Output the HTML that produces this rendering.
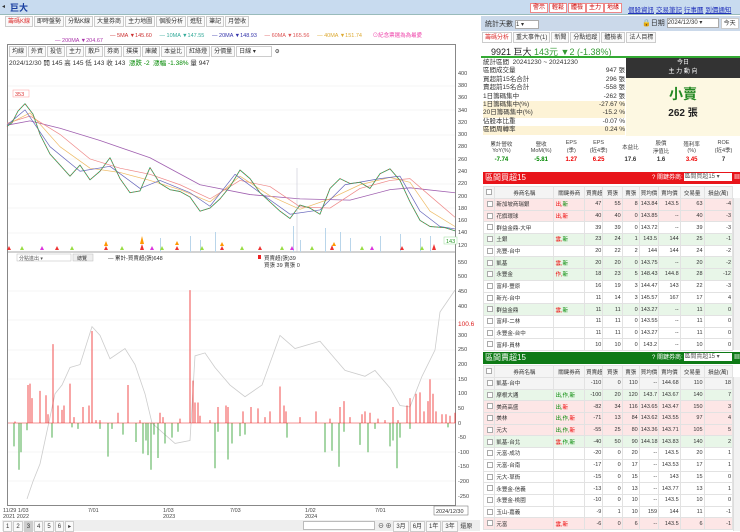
<!DOCTYPE html><html><head><meta charset="utf-8"><style>
*{box-sizing:border-box;margin:0;padding:0}
body{width:740px;height:531px;overflow:hidden;background:#fff;font-family:"Liberation Sans","Noto Sans CJK TC",sans-serif;font-size:7px;color:#333;position:relative}
.a{position:absolute}
.btn{position:absolute;top:3px;height:10px;border:1px solid #e88;background:#fff;color:#c00;font-size:6px;line-height:8px;padding:0 2px}
.lk{color:#2233bb;text-decoration:underline;font-size:6.5px}
.tab{display:inline-block;border:1px solid #ccc;padding:0 2px;height:11px;line-height:10px;font-size:6px;margin-right:1px;background:#fafafa}
table{border-collapse:collapse}
.t td{border:1px solid #e2e2e2;height:11.7px;font-size:5.5px;text-align:right;padding:0 1px;white-space:nowrap;overflow:hidden}
.t td:nth-child(2),.t td:nth-child(3){text-align:left}
.t tr.h td{text-align:center;background:#f4f4f4;height:12px}
.pk td{background:#fde6e6}.gr td{background:#e8f6e8}
.r{color:#e00}.g{color:#080}
.cb{display:inline-block;width:6px;height:6px;border:1px solid #aaa;background:#fff;vertical-align:middle}
</style></head><body>
<div class="a" style="left:0;top:0;width:740px;height:15px;background:#c8dbef;border-bottom:1px solid #9bb"></div>
<div class="a" style="left:2px;top:3px;font-size:6px">◂</div>
<div class="a" style="left:10px;top:1px;font-size:9px;color:#1a3fa0;font-weight:bold">巨大</div>
<div class="btn" style="left:530px">警示</div><div class="btn" style="left:549px">輕鬆</div><div class="btn" style="left:568px">體檢</div><div class="btn" style="left:586px">主力</div><div class="btn" style="left:604px">地緣</div>
<div class="a" style="left:628px;top:4px"><span class="lk">個股資訊</span> <span class="lk">交易筆記</span> <span class="lk">行事曆</span> <span class="lk">到價通知</span></div>
<div class="a" style="left:5px;top:16px"><span class="tab" style="color:#d33">籌碼K線</span><span class="tab">即時盤勢</span><span class="tab">分點K線</span><span class="tab">大量券商</span><span class="tab">主力地圖</span><span class="tab">個股分析</span><span class="tab">進駐</span><span class="tab">筆記</span><span class="tab">月營收</span></div>
<div class="a" style="left:110px;top:31px;font-size:5.5px;white-space:nowrap"><span style="color:#c33">— </span><span style="color:#c33">5MA ▼145.60</span> &nbsp; &nbsp; <span style="color:#3a9">— 10MA ▼147.55</span> &nbsp; &nbsp; <span style="color:#33a">— 20MA ▼148.93</span> &nbsp; &nbsp; <span style="color:#d55">— 60MA ▼165.56</span> &nbsp; &nbsp; <span style="color:#da3">— 40MA ▼151.74</span> &nbsp; &nbsp; &nbsp; <span style="color:#e4a">⊙紀念票選為為最愛</span></div>
<div class="a" style="left:55px;top:38px;font-size:5.5px;color:#a3a">— 200MA ▼204.67</div>
<div class="a" style="left:7px;top:44px;width:449px;height:462px;border:1px solid #888"></div>
<div class="a" style="left:9px;top:46px;font-size:5.5px"><span class="tab">均線</span><span class="tab">外資</span><span class="tab">投信</span><span class="tab">主力</span><span class="tab">散戶</span><span class="tab">券商</span><span class="tab">撲撲</span><span class="tab">庫藏</span><span class="tab">本益比</span><span class="tab">紅綠燈</span><span class="tab">分價量</span><span class="tab" style="width:36px;background:#fff">日線 ▾</span> ⚙</div>
<div class="a" style="left:9px;top:57px;font-size:6.5px">2024/12/30 開 145 高 145 低 143 收 143 &nbsp;<span class="g">漲跌 -2 &nbsp;漲幅 -1.38%</span> 量 947</div>
<svg class="a" style="left:0;top:0" width="480" height="531">
<g stroke="#eee" stroke-width="0.6"><line x1="8" x2="455" y1="86" y2="86"/><line x1="8" x2="455" y1="110" y2="110"/><line x1="8" x2="455" y1="135" y2="135"/><line x1="8" x2="455" y1="159" y2="159"/><line x1="8" x2="455" y1="184" y2="184"/><line x1="8" x2="455" y1="208" y2="208"/><line x1="8" x2="455" y1="233" y2="233"/>
<line x1="8" x2="455" y1="291" y2="291"/><line x1="8" x2="455" y1="320" y2="320"/><line x1="8" x2="455" y1="350" y2="350"/><line x1="8" x2="455" y1="379" y2="379"/><line x1="8" x2="455" y1="452" y2="452"/><line x1="8" x2="455" y1="481" y2="481"/></g>
<line x1="8" x2="455" y1="252" y2="252" stroke="#888" stroke-width="0.8"/>
<g fill="#b9d5ea"><rect x="190" y="236" width="1" height="16"/><rect x="200" y="240" width="1" height="12"/><rect x="215" y="232" width="1" height="20"/><rect x="293" y="226" width="1" height="26"/><rect x="325" y="228" width="1" height="24"/><rect x="340" y="232" width="1" height="20"/><rect x="160" y="238" width="1" height="14"/><rect x="380" y="236" width="1" height="16"/><rect x="400" y="234" width="1" height="18"/><rect x="420" y="238" width="1" height="14"/><rect x="430" y="236" width="1" height="16"/><rect x="300" y="240" width="1" height="12"/><rect x="350" y="238" width="1" height="14"/></g>
<g transform="matrix(1 0 0 -0.614 0 318.6)" fill="none" stroke-linejoin="round">
<polyline vector-effect="non-scaling-stroke" stroke="#a060b0" stroke-width="0.8" points="7,315 30,322 60,310 100,290 150,262 200,218 250,202 300,195 350,193 390,210 410,213 455,205"/>
<polyline vector-effect="non-scaling-stroke" stroke="#e88" stroke-width="0.7" points="7,318 30,330 60,300 90,260 120,245 150,235 180,218 210,195 240,225 270,215 300,182 330,180 360,212 390,225 410,228 430,200 455,165"/>
<polyline vector-effect="non-scaling-stroke" stroke="#eb6" stroke-width="0.7" points="7,316 30,335 60,280 90,245 120,238 150,225 180,210 210,190 240,232 270,200 300,178 330,195 360,218 390,230 410,222 430,175 455,150"/>
<polyline vector-effect="non-scaling-stroke" stroke="#66b" stroke-width="0.7" points="7,315 25,340 50,280 80,240 110,248 140,212 160,225 190,205 210,183 235,235 260,205 290,170 320,177 345,218 380,228 400,232 420,175 440,150 455,146"/>
<polyline vector-effect="non-scaling-stroke" stroke="#3a6" stroke-width="0.9" points="7,313 12,319 18,338 25,350 33,333 40,300 50,268 60,250 70,232 80,250 90,226 100,240 110,262 120,228 130,205 140,208 150,246 160,220 170,210 180,207 190,198 200,175 210,180 220,195 230,215 240,242 250,228 260,205 270,190 280,175 290,163 300,185 310,180 320,170 330,212 340,228 350,220 360,222 370,212 380,236 390,244 400,225 410,190 420,160 430,150 445,148 455,143"/>
<polyline vector-effect="non-scaling-stroke" stroke="#e33" stroke-width="0.6" stroke-dasharray="1 2" points="7,313 12,319 18,338 25,350 33,333 40,300 50,268 60,250 70,232 80,250 90,226 100,240 110,262 120,228 130,205 140,208 150,246 160,220 170,210 180,207 190,198 200,175 210,180 220,195 230,215 240,242 250,228 260,205 270,190 280,175 290,163 300,185 310,180 320,170 330,212 340,228 350,220 360,222 370,212 380,236 390,244 400,225 410,190 420,160 430,150 445,148 455,143"/>
</g>
<line x1="297" x2="297" y1="168" y2="252" stroke="#bbc" stroke-width="0.5"/>
<g fill="#e33"><path d="M7 250l2-4 2 4zM55 250l2-4 2 4zM104 250l2-4 2 4zM140 250l2-6 2 6zM175 250l2-4 2 4zM220 250l2-4 2 4zM258 250l2-4 2 4zM330 250l2-5 2 5zM400 250l2-4 2 4zM432 250l2-6 2 6z"/></g>
<g fill="#f90"><path d="M104 246l2-5 2 5zM140 244l2-8 2 8zM175 245l2-4 2 4zM220 246l2-4 2 4zM332 246l2-4 2 4z"/></g>
<g fill="#9d4"><path d="M20 250l2-4 2 4zM70 250l2-4 2 4zM120 250l2-4 2 4zM160 250l2-4 2 4zM200 250l2-4 2 4zM240 250l2-4 2 4zM280 250l2-4 2 4zM310 250l2-4 2 4zM360 250l2-4 2 4zM420 250l2-4 2 4z"/></g>
<g fill="#d3d"><path d="M40 250l2-4 2 4zM150 250l2-4 2 4zM290 250l2-4 2 4zM370 250l2-4 2 4z"/></g>
<g transform="matrix(1 0 0 -0.292 0 423)">
<polyline vector-effect="non-scaling-stroke" fill="none" stroke="#ccc" stroke-width="0.8" points="27,-260 33,-200 40,-140 55,100 62,130 70,190 80,200 92,330 100,300 110,220 125,255 135,200 145,100 152,0 165,-40 175,-70 190,-60 195,230 205,240 215,190 230,130 245,90 262,130 280,300 295,255 320,280 335,220 345,180 365,160 375,180 390,120 400,60 410,55 422,160 435,250 440,380 455,455"/>
<path vector-effect="non-scaling-stroke" stroke="#e22" stroke-width="0.8" d="M28 0V130M30 0V135M32 0V85M40 0V110M46 0V95M48 0V30M53 0V270M58 0V60M62 0V45M64 0V60M70 0V135M74 0V20M83 0V55M89 0V60M92 0V315M96 0V10M118 0V35M128 0V130M160 0V35M163 0V20M190 0V455M193 0V145M195 0V70M198 0V70M200 0V25M218 0V55M226 0V60M228 0V55M243 0V40M251 0V55M258 0V50M270 0V40M280 0V125M284 0V60M286 0V40M300 0V20M316 0V40M340 0V55M344 0V75M362 0V30M365 0V40M370 0V35M393 0V55M407 0V60M410 0V85M416 0V100M420 0V105M424 0V40M428 0V75M430 0V150M433 0V100M436 0V40M442 0V30M446 0V30M450 0V25M455 0V35M15 0V5M100 0V10M140 0V10M180 0V15M210 0V10M265 0V20M300 0V15M330 0V15M350 0V20M378 0V15M385 0V10M398 0V10"/>
<path vector-effect="non-scaling-stroke" stroke="#292" stroke-width="0.8" d="M14 0V-80M19 0V-160M21 0V-100M27 0V-25M52 0V-50M72 0V-15M78 0V-20M100 0V-20M108 0V-115M112 0V-20M123 0V-40M136 0V-65M143 0V-105M146 0V-60M148 0V-110M151 0V-160M154 0V-40M158 0V-120M165 0V-70M172 0V-50M178 0V-30M215 0V-155M218 0V-30M228 0V-125M232 0V-70M240 0V-45M245 0V-40M287 0V-50M325 0V-100M332 0V-95M339 0V-150M344 0V-30M360 0V-75M368 0V-100M375 0V-20M390 0V-80M393 0V-60M397 0V-155M400 0V-50M410 0V-20M448 0V-15"/>
</g>
<line x1="8" x2="455" y1="423" y2="423" stroke="#e22" stroke-width="0.6"/>
<g font-size="5.5" fill="#444" font-family="Liberation Sans,sans-serif">
<text x="458" y="75">400</text><text x="458" y="87">380</text><text x="458" y="99">360</text><text x="458" y="112">340</text><text x="458" y="124">320</text><text x="458" y="136">300</text><text x="458" y="148">280</text><text x="458" y="161">260</text><text x="458" y="173">240</text><text x="458" y="185">220</text><text x="458" y="198">200</text><text x="458" y="210">180</text><text x="458" y="222">160</text><text x="458" y="234">140</text><text x="458" y="247">120</text>
<text x="458" y="264">550</text><text x="458" y="278">500</text><text x="458" y="293">450</text><text x="458" y="308">400</text><text x="458" y="337">300</text><text x="458" y="351">250</text><text x="458" y="366">200</text><text x="458" y="381">150</text><text x="458" y="395">100</text><text x="458" y="410">50</text><text x="458" y="425">0</text><text x="458" y="439">-50</text><text x="458" y="454">-100</text><text x="458" y="468">-150</text><text x="458" y="483">-200</text><text x="458" y="498">-250</text>
<text x="3" y="512">11/29 1/03</text><text x="3" y="518">2021 2022</text><text x="88" y="512">7/01</text><text x="163" y="512">1/03</text><text x="163" y="518">2023</text><text x="230" y="512">7/03</text><text x="305" y="512">1/02</text><text x="305" y="518">2024</text><text x="375" y="512">7/01</text>
</g>
<text x="458" y="326" font-size="6.5" fill="#d22">100.6</text>
<rect x="13" y="90" width="16" height="7" fill="#fff" stroke="#f99" stroke-width="0.5"/><text x="15" y="96" font-size="5.5" fill="#d33">353</text>
<rect x="444" y="237" width="13" height="7" fill="#fff" stroke="#9d9" stroke-width="0.5"/><text x="446" y="243" font-size="5.5" fill="#292">143</text>
<rect x="434" y="506" width="34" height="9" fill="#fff" stroke="#666" stroke-width="0.5"/><text x="436" y="513" font-size="5.5" fill="#333">2024/12/30</text>
<rect x="17" y="254" width="54" height="7" fill="#fff" stroke="#bbb" stroke-width="0.5"/><text x="19" y="260" font-size="5" fill="#555">分點進出 ▾</text>
<rect x="73" y="254" width="20" height="7" fill="#eee" stroke="#bbb" stroke-width="0.5"/><text x="77" y="260" font-size="5" fill="#333">總覽</text>
<text x="108" y="260" font-size="5.5" fill="#333">— 累計-買賣超(張)648</text>
<rect x="258" y="255" width="3" height="4" fill="#e22"/><text x="264" y="260" font-size="5.5" fill="#333">買賣超(張)39</text><text x="264" y="267" font-size="5.5" fill="#333">買張 39 賣張 0</text>
</svg>
<div class="a" style="left:2px;top:520px;width:478px;height:11px;background:#eee"></div>
<div class="a" style="left:3px;top:521px;font-size:6px"><span class="tab">1</span><span class="tab">2</span><span class="tab" style="background:#ccc">3</span><span class="tab">4</span><span class="tab">5</span><span class="tab">6</span><span class="tab">▸</span></div>
<div class="a" style="left:303px;top:521px;width:72px;height:9px;border:1px solid #bbb;background:#fff"></div>
<div class="a" style="left:378px;top:521px;font-size:6px">⊖ ⊕ <span class="tab">3月</span><span class="tab">6月</span><span class="tab">1年</span><span class="tab">3年</span> 還原</div>
<div class="a" style="left:481px;top:16px;width:259px;height:15px;background:#cbd9ea"></div>
<div class="a" style="left:485px;top:19px;font-size:7px">統計天數 <span style="display:inline-block;width:24px;height:9px;background:#fff;border:1px solid #aaa;font-size:6px;vertical-align:middle">1 ▾</span></div>
<div class="a" style="left:642px;top:18px;font-size:7px">🔒日期 <span style="display:inline-block;width:52px;height:10px;background:#fff;border:1px solid #aaa;font-size:6px;vertical-align:middle">2024/12/30 ▾</span> <span class="tab" style="background:#fff">今天</span></div>
<div class="a" style="left:482px;top:32px;font-size:6px"><span class="tab" style="color:#d33;background:#fff">籌碼分析</span><span class="tab">重大事件(1)</span><span class="tab">新聞</span><span class="tab">分點追蹤</span><span class="tab">體檢表</span><span class="tab">法人目標</span></div>
<div class="a" style="left:481px;top:43px;width:259px;height:15px;border-bottom:2px solid #3a3"></div>
<div class="a" style="left:491px;top:45px;font-size:9px;color:#222">9921 巨大 <span style="color:#393">143元 ▼2 (-1.38%)</span></div>
<div class="a" style="left:626px;top:58px;width:114px;height:20px;background:#333;color:#fff;text-align:center;font-size:6px;line-height:9px;padding-top:1px">今日<br>主 力 動 向</div>
<div class="a" style="left:626px;top:78px;width:114px;height:58px;background:#fdf8e2;text-align:center"><div style="font-size:14px;color:#282;margin-top:6px;font-weight:bold">小賣</div><div style="font-size:10px;color:#222;font-weight:bold">262 張</div></div>
<div class="a" style="left:483px;top:59px;width:142px;font-size:6.5px;line-height:8.4px">
<div>統計區間 &nbsp;20241230 ~ 20241230</div>
<div>區間成交量<span style="float:right">947 張</span></div>
<div>買超前15名合計<span style="float:right">296 張</span></div>
<div>賣超前15名合計<span style="float:right">-558 張</span></div>
<div>1日籌碼集中<span style="float:right">-262 張</span></div>
<div style="background:#fdf3d6">1日籌碼集中(%)<span style="float:right">-27.67 %</span></div>
<div style="background:#fdf3d6">20日籌碼集中(%)<span style="float:right">-15.2 %</span></div>
<div>佔股本比重<span style="float:right">-0.07 %</span></div>
<div style="background:#fdf3d6">區間周轉率<span style="float:right">0.24 %</span></div></div>
<table class="a" style="left:481px;top:139px;width:259px;font-size:5.5px;text-align:center">
<tr style="height:16px;color:#444"><td>累計營收<br>YoY(%)</td><td>營收<br>MoM(%)</td><td>EPS<br>(季)</td><td>EPS<br>(近4季)</td><td>本益比</td><td>股價<br>淨值比</td><td>殖利率<br>(%)</td><td>ROE<br>(近4季)</td></tr>
<tr style="height:10px;font-weight:bold;font-size:6px"><td class="g">-7.74</td><td class="g">-5.81</td><td class="r">1.27</td><td class="r">6.25</td><td>17.6</td><td>1.6</td><td class="r">3.45</td><td>7</td></tr></table>
<div class="a" style="left:483px;top:172px;width:257px;height:12px;background:#e8141a;color:#fff;font-size:8px;line-height:12px;padding-left:2px">區間買超15<span style="float:right;font-size:6px">? 關鍵券商: <span style="display:inline-block;width:48px;height:8px;background:#fff;color:#555;vertical-align:middle;line-height:8px">區間買超15 ▾</span> ▦ </span></div>
<table class="t a" style="left:483px;top:186px;width:250px;table-layout:fixed">
<colgroup><col style="width:10px"><col style="width:52px"><col style="width:27px"><col style="width:16px"><col style="width:17px"><col style="width:15px"><col style="width:17px"><col style="width:19px"><col style="width:21px"><col style="width:25px"></colgroup>
<tr class="h"><td><span class="cb"></span></td><td style="text-align:center">券商名稱</td><td style="text-align:center">關鍵券商</td><td>買賣超</td><td>買張</td><td>賣張</td><td>買均價</td><td>賣均價</td><td>交易量</td><td>損益(萬)</td></tr>
<tr class="pk"><td><span class="cb"></span></td><td>新加坡商瑞銀</td><td class="r">出,<span class="g">新</span></td><td>47</td><td>55</td><td>8</td><td>143.84</td><td>143.5</td><td>63</td><td>-4</td></tr>
<tr class="pk"><td><span class="cb"></span></td><td>花旗環球</td><td class="r">出,新</td><td>40</td><td>40</td><td>0</td><td>143.85</td><td>--</td><td>40</td><td>-3</td></tr>
<tr><td><span class="cb"></span></td><td>群益金鼎-大甲</td><td></td><td>39</td><td>39</td><td>0</td><td>143.72</td><td>--</td><td>39</td><td>-3</td></tr>
<tr class="gr"><td><span class="cb"></span></td><td>土銀</td><td class="r">雲,<span class="g">新</span></td><td>23</td><td>24</td><td>1</td><td>143.5</td><td>144</td><td>25</td><td>-1</td></tr>
<tr><td><span class="cb"></span></td><td>兆豐-台中</td><td></td><td>20</td><td>22</td><td>2</td><td>144</td><td>144</td><td>24</td><td>-2</td></tr>
<tr class="gr"><td><span class="cb"></span></td><td>凱基</td><td class="r">雲,<span class="g">新</span></td><td>20</td><td>20</td><td>0</td><td>143.75</td><td>--</td><td>20</td><td>-2</td></tr>
<tr class="gr"><td><span class="cb"></span></td><td>永豐金</td><td class="r">作,<span class="g">新</span></td><td>18</td><td>23</td><td>5</td><td>148.43</td><td>144.8</td><td>28</td><td>-12</td></tr>
<tr><td><span class="cb"></span></td><td>富邦-豐原</td><td></td><td>16</td><td>19</td><td>3</td><td>144.47</td><td>143</td><td>22</td><td>-3</td></tr>
<tr><td><span class="cb"></span></td><td>新光-台中</td><td></td><td>11</td><td>14</td><td>3</td><td>145.57</td><td>167</td><td>17</td><td>4</td></tr>
<tr class="gr"><td><span class="cb"></span></td><td>群益金鼎</td><td class="r">雲,<span class="g">新</span></td><td>11</td><td>11</td><td>0</td><td>143.27</td><td>--</td><td>11</td><td>0</td></tr>
<tr><td><span class="cb"></span></td><td>富邦-二林</td><td></td><td>11</td><td>11</td><td>0</td><td>143.55</td><td>--</td><td>11</td><td>0</td></tr>
<tr><td><span class="cb"></span></td><td>永豐金-台中</td><td></td><td>11</td><td>11</td><td>0</td><td>143.27</td><td>--</td><td>11</td><td>0</td></tr>
<tr><td><span class="cb"></span></td><td>富邦-員林</td><td></td><td>10</td><td>10</td><td>0</td><td>143.2</td><td>--</td><td>10</td><td>0</td></tr>
</table>
<div class="a" style="left:733px;top:198px;width:7px;height:152px;background:#f2f2f2;border-left:1px solid #ddd"></div>
<div class="a" style="left:483px;top:352px;width:257px;height:12px;background:#0e7a16;color:#fff;font-size:8px;line-height:12px;padding-left:2px">區間賣超15<span style="float:right;font-size:6px">? 關鍵券商: <span style="display:inline-block;width:48px;height:8px;background:#fff;color:#555;vertical-align:middle;line-height:8px">區間賣超15 ▾</span> ▦ </span></div>
<table class="t a" style="left:483px;top:365px;width:250px;table-layout:fixed">
<colgroup><col style="width:10px"><col style="width:52px"><col style="width:27px"><col style="width:16px"><col style="width:17px"><col style="width:15px"><col style="width:17px"><col style="width:19px"><col style="width:21px"><col style="width:25px"></colgroup>
<tr class="h"><td><span class="cb"></span></td><td style="text-align:center">券商名稱</td><td style="text-align:center">關鍵券商</td><td>買賣超</td><td>買張</td><td>賣張</td><td>買均價</td><td>賣均價</td><td>交易量</td><td>損益(萬)</td></tr>
<tr style="background:#f4f4f4"><td><span class="cb"></span></td><td>凱基-台中</td><td></td><td>-110</td><td>0</td><td>110</td><td>--</td><td>144.68</td><td>110</td><td>18</td></tr>
<tr class="gr"><td><span class="cb"></span></td><td>摩根大通</td><td class="g">出,作,新</td><td>-100</td><td>20</td><td>120</td><td>143.7</td><td>143.67</td><td>140</td><td>7</td></tr>
<tr class="pk"><td><span class="cb"></span></td><td>美商高盛</td><td class="g">出,<span class="r">新</span></td><td>-82</td><td>34</td><td>116</td><td>143.65</td><td>143.47</td><td>150</td><td>3</td></tr>
<tr class="pk"><td><span class="cb"></span></td><td>美林</td><td class="g">出,作,<span class="r">新</span></td><td>-71</td><td>13</td><td>84</td><td>143.62</td><td>143.55</td><td>97</td><td>4</td></tr>
<tr class="pk"><td><span class="cb"></span></td><td>元大</td><td class="g">出,作,<span class="r">新</span></td><td>-55</td><td>25</td><td>80</td><td>143.36</td><td>143.71</td><td>105</td><td>5</td></tr>
<tr class="gr"><td><span class="cb"></span></td><td>凱基-台北</td><td class="r">雲,<span class="g">作,新</span></td><td>-40</td><td>50</td><td>90</td><td>144.18</td><td>143.83</td><td>140</td><td>2</td></tr>
<tr><td><span class="cb"></span></td><td>元富-成功</td><td></td><td>-20</td><td>0</td><td>20</td><td>--</td><td>143.5</td><td>20</td><td>1</td></tr>
<tr><td><span class="cb"></span></td><td>元富-台南</td><td></td><td>-17</td><td>0</td><td>17</td><td>--</td><td>143.53</td><td>17</td><td>1</td></tr>
<tr><td><span class="cb"></span></td><td>元大-草衙</td><td></td><td>-15</td><td>0</td><td>15</td><td>--</td><td>143</td><td>15</td><td>0</td></tr>
<tr><td><span class="cb"></span></td><td>永豐金-信義</td><td></td><td>-13</td><td>0</td><td>13</td><td>--</td><td>143.77</td><td>13</td><td>1</td></tr>
<tr><td><span class="cb"></span></td><td>永豐金-桃園</td><td></td><td>-10</td><td>0</td><td>10</td><td>--</td><td>143.5</td><td>10</td><td>0</td></tr>
<tr><td><span class="cb"></span></td><td>玉山-嘉義</td><td></td><td>-9</td><td>1</td><td>10</td><td>159</td><td>144</td><td>11</td><td>-1</td></tr>
<tr class="pk"><td><span class="cb"></span></td><td>元富</td><td class="r">雲,新</td><td>-6</td><td>0</td><td>6</td><td>--</td><td>143.5</td><td>6</td><td>-1</td></tr>
</table>
<div class="a" style="left:733px;top:377px;width:7px;height:154px;background:#f2f2f2;border-left:1px solid #ddd"></div>
</body></html>
